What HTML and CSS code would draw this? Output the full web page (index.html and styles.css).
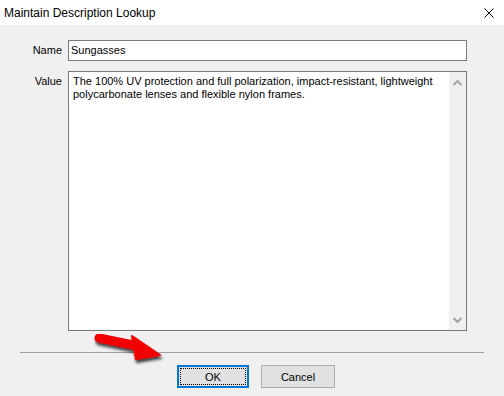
FILE: index.html
```html
<!DOCTYPE html>
<html lang="en">

<head>
    <meta charset="UTF-8">
    <title>Maintain Description Lookup</title>
    <link rel="stylesheet" href="styles.css">
</head>

<body>
    <div class="dialog">
        <div class="titlebar">
            <span class="title">Maintain Description Lookup</span>
            <svg class="close" width="10" height="10" viewBox="0 0 10 10">
                <path d="M0.5 0.5 L9.5 9.5 M9.5 0.5 L0.5 9.5" stroke="#000" stroke-width="1" />
            </svg>
        </div>

        <div class="content">
            <div class="form">
                <label class="label label-name">Name</label>
                <div class="input">Sungasses</div>

                <label class="label label-value">Value</label>
                <div class="memo">
                    <div class="memo-text">The 100% UV protection and full polarization, impact-resistant, lightweight polycarbonate lenses and flexible nylon frames.</div>
                    <div class="scrollbar">
                        <svg width="9" height="6" viewBox="0 0 9 6">
                            <path d="M0.5 5 L4.5 1 L8.5 5" stroke="#a3a3a3" stroke-width="2" fill="none" />
                        </svg>
                        <svg width="9" height="6" viewBox="0 0 9 6">
                            <path d="M0.5 1 L4.5 5 L8.5 1" stroke="#a3a3a3" stroke-width="2" fill="none" />
                        </svg>
                    </div>
                </div>
            </div>

            <div class="separator"></div>

            <div class="buttons">
                <button class="btn btn-default"><span class="focus">OK</span></button>
                <button class="btn">Cancel</button>
            </div>
        </div>

        <!-- red pointer arrow drawn over the dialog -->
        <svg class="pointer" width="80" height="40" viewBox="0 0 80 40">
            <defs>
                <filter id="shadow" x="-20%" y="-30%" width="140%" height="170%">
                    <feDropShadow dx="1" dy="3" stdDeviation="1.6" flood-color="#000" flood-opacity="0.75" />
                </filter>
            </defs>
            <g filter="url(#shadow)">
                <path d="M5 4 L44 12 L44 12" stroke="#f20000" stroke-width="9" stroke-linecap="round" fill="none" />
                <path d="M38 2 L66 21 L42 25 Z" fill="#f20000" stroke="#f20000" stroke-width="2" stroke-linejoin="round" />
            </g>
        </svg>
    </div>
</body>

</html>
```

FILE: styles.css
```css
* {
    padding: 0;
    margin: 0;
    box-sizing: border-box;
}

body {
    width: 504px;
    height: 396px;
    overflow: hidden;
    font-family: "Liberation Sans", Arial, sans-serif;
    font-size: 11px;
    color: #000;
    background-color: #f0f0f0;
}

.dialog {
    position: relative;
    width: 504px;
    height: 396px;
    background-color: #f0f0f0;
}

.titlebar {
    height: 25px;
    background-color: #ffffff;
    display: flex;
    align-items: center;
    justify-content: space-between;
    padding: 0 10px 0 4px;
}

.title {
    font-size: 12px;
    color: #000;
}

.close {
    margin-top: 1px;
}

.content {
    padding-top: 15px;
}

.form {
    display: grid;
    grid-template-columns: 62px 399px;
    column-gap: 6px;
    row-gap: 10px;
}

.label {
    text-align: right;
    padding-top: 4px;
}

.input {
    height: 21px;
    background-color: #ffffff;
    border: 1px solid #7a7a7a;
    padding: 3px 2px;
    line-height: 13px;
}

.memo {
    height: 260px;
    background-color: #ffffff;
    border: 1px solid #7a7a7a;
    display: flex;
}

.memo-text {
    flex: 1;
    padding: 3px 4px;
    line-height: 13px;
}

.scrollbar {
    width: 17px;
    background-color: #f0f0f0;
    display: flex;
    flex-direction: column;
    justify-content: space-between;
    align-items: center;
    padding: 8px 0 7px;
}

.separator {
    margin: 21px 20px 0 20px;
    height: 1px;
    background-color: #a0a0a0;
}

.buttons {
    display: flex;
    gap: 12px;
    padding: 12px 0 0 177px;
}

.btn {
    width: 72px;
    height: 23px;
    background-color: #e1e1e1;
    border: 1px solid #adadad;
    font-family: "Liberation Sans", Arial, sans-serif;
    font-size: 11px;
    color: #000;
    display: flex;
    align-items: center;
    justify-content: center;
}

.btn + .btn {
    width: 74px;
}

.btn-default {
    border: 2px solid #0078d7;
    padding: 1px;
}

.focus {
    width: 100%;
    height: 100%;
    border: 1px dotted #000;
    display: flex;
    align-items: center;
    justify-content: center;
}

.pointer {
    position: absolute;
    left: 94px;
    top: 334px;
}
```
